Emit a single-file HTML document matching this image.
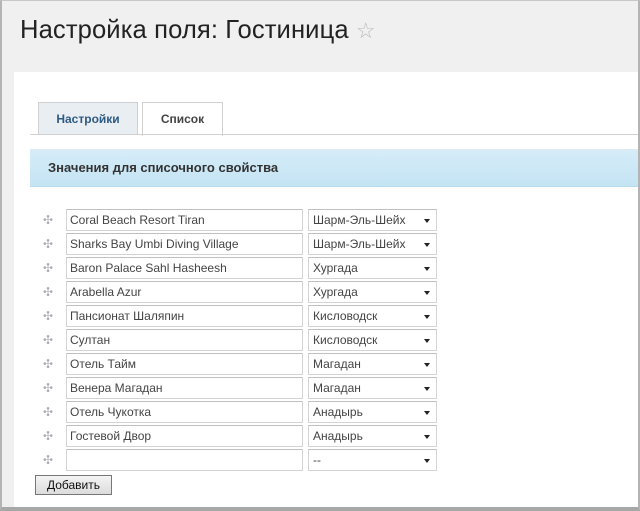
<!DOCTYPE html>
<html><head><meta charset="utf-8"><style>
*{box-sizing:border-box;margin:0;padding:0}
body{width:640px;height:511px;overflow:hidden;background:#f0f0f0;font-family:"Liberation Sans",Arial,sans-serif;position:relative}
.frame{position:absolute;left:0;top:0;width:640px;height:511px;border:2px solid #b4b4b4;border-bottom:4px solid #a8a8a8;border-top:1px solid #c8c8c8;pointer-events:none}
h1{position:absolute;left:20px;top:16px;font-weight:normal;font-size:25.6px;color:#222;letter-spacing:0.1px}
h1 span{color:#bbb;font-size:22px}
.panel{position:absolute;left:14px;top:72px;width:624px;height:435px;background:#fff}
.tab{position:absolute;top:102px;height:33px;border:1px solid #d0d0d0;border-bottom:none;font-size:12px;font-weight:bold;text-align:center;line-height:32px}
.t1{left:38px;width:100px;background:#e9eef3;color:#2e5a82}
.t2{left:142px;width:81px;background:#fff;color:#444;height:34px}
.line{position:absolute;left:30px;top:134px;width:610px;height:1px;background:#d0d0d0}
.bar{position:absolute;left:30px;top:149px;width:610px;height:38px;background:linear-gradient(#d6ecf8,#c4e4f4);border-top:1px solid #e0e8f0;border-bottom:1px solid #b8dced;font-size:13px;font-weight:bold;color:#333;line-height:36px;padding-left:18px}
.inp{position:absolute;left:66px;width:237px;height:22px;border:1px solid #d4d4d4;border-top-color:#c0c0c0;background:#fff;font-size:12px;color:#444;line-height:20px;padding-left:3px}
.sel{position:absolute;left:308px;width:129px;height:22px;border:1px solid #d4d4d4;border-top-color:#c0c0c0;background:#fff;font-size:12px;color:#444;line-height:20px;padding-left:4px}
.sel:after{content:"";position:absolute;right:6px;top:9px;border-left:3.5px solid transparent;border-right:3.5px solid transparent;border-top:4px solid #222}
.drag{position:absolute;left:43px;width:12px;height:12px;color:#aab;font-size:12px;line-height:12px}
.btn{position:absolute;left:35px;top:475px;width:77px;height:20px;border:1px solid #777;background:linear-gradient(#f4f4f4,#dcdcdc);font-size:12px;color:#111;text-align:center;line-height:18px}
</style></head><body>
<h1>Настройка поля: Гостиница <span>☆</span></h1>
<div class="panel"></div>
<div class="tab t1">Настройки</div>
<div class="tab t2">Список</div>
<div class="line"></div>
<div class="bar">Значения для списочного свойства</div>

<div class="drag" style="top:214px">✣</div><div class="inp" style="top:209px">Coral Beach Resort Tiran</div><div class="sel" style="top:209px">Шарм-Эль-Шейх</div>
<div class="drag" style="top:238px">✣</div><div class="inp" style="top:233px">Sharks Bay Umbi Diving Village</div><div class="sel" style="top:233px">Шарм-Эль-Шейх</div>
<div class="drag" style="top:262px">✣</div><div class="inp" style="top:257px">Baron Palace Sahl Hasheesh</div><div class="sel" style="top:257px">Хургада</div>
<div class="drag" style="top:286px">✣</div><div class="inp" style="top:281px">Arabella Azur</div><div class="sel" style="top:281px">Хургада</div>
<div class="drag" style="top:310px">✣</div><div class="inp" style="top:305px">Пансионат Шаляпин</div><div class="sel" style="top:305px">Кисловодск</div>
<div class="drag" style="top:334px">✣</div><div class="inp" style="top:329px">Султан</div><div class="sel" style="top:329px">Кисловодск</div>
<div class="drag" style="top:358px">✣</div><div class="inp" style="top:353px">Отель Тайм</div><div class="sel" style="top:353px">Магадан</div>
<div class="drag" style="top:382px">✣</div><div class="inp" style="top:377px">Венера Магадан</div><div class="sel" style="top:377px">Магадан</div>
<div class="drag" style="top:406px">✣</div><div class="inp" style="top:401px">Отель Чукотка</div><div class="sel" style="top:401px">Анадырь</div>
<div class="drag" style="top:430px">✣</div><div class="inp" style="top:425px">Гостевой Двор</div><div class="sel" style="top:425px">Анадырь</div>
<div class="drag" style="top:454px">✣</div><div class="inp" style="top:449px"></div><div class="sel" style="top:449px">--</div>

<div class="btn">Добавить</div>
<div class="frame"></div>
</body></html>
